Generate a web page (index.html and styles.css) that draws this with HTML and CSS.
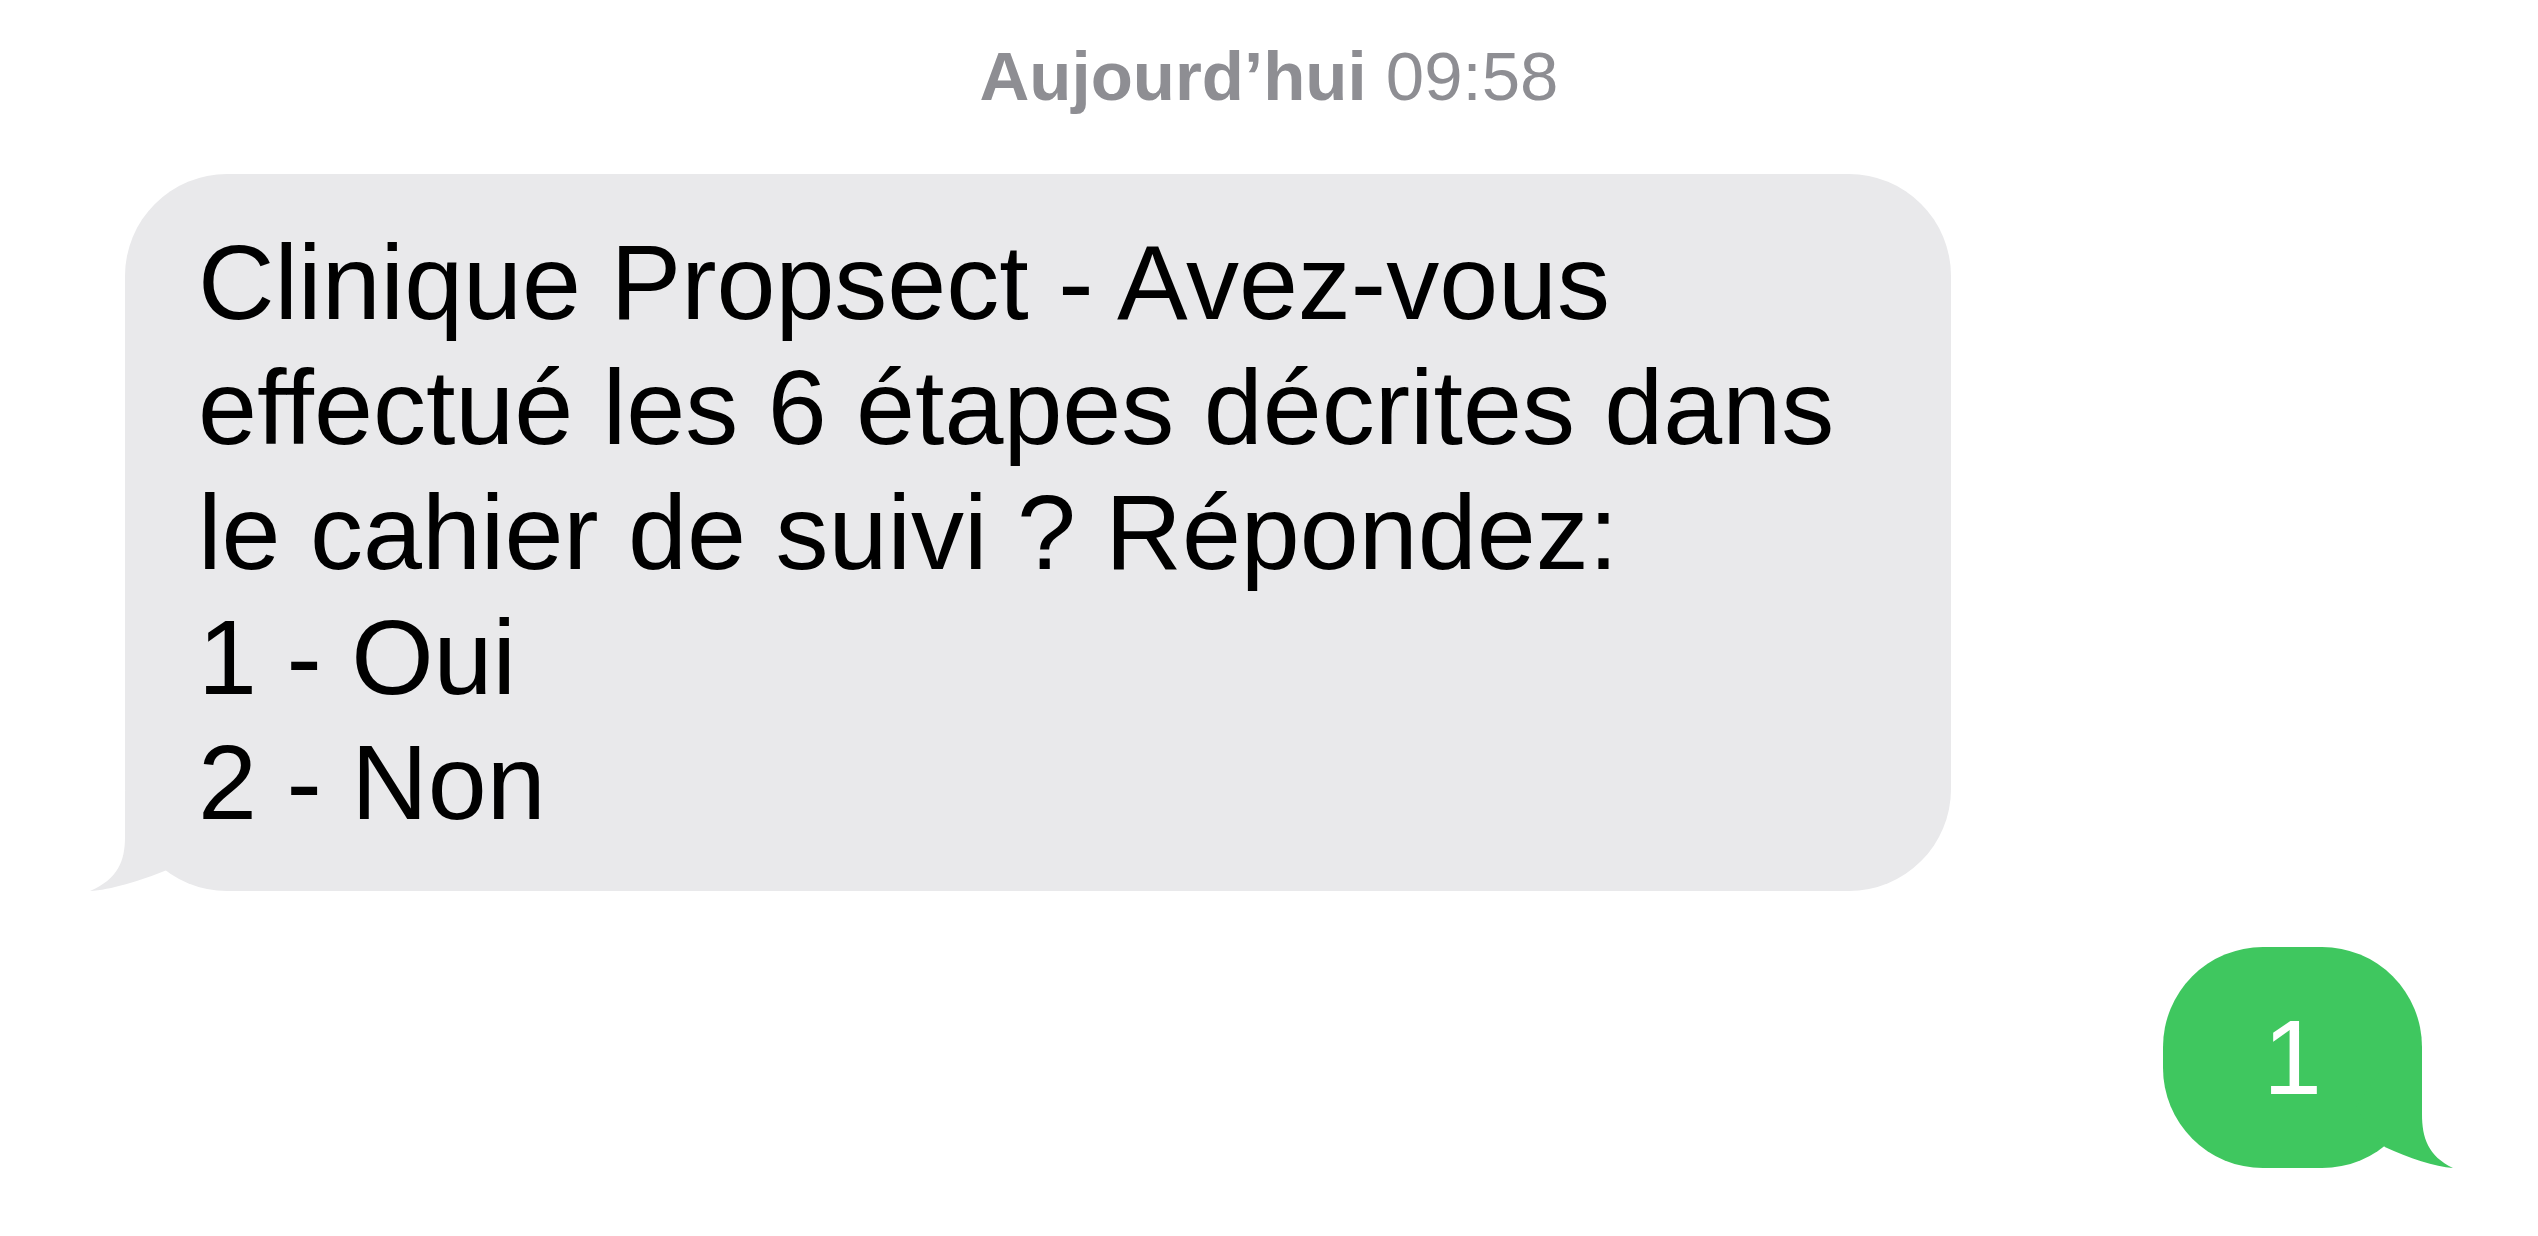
FILE: index.html
```html
<!DOCTYPE html>
<html lang="fr">
<head>
    <meta charset="UTF-8">
    <meta name="viewport" content="width=device-width, initial-scale=1.0">
    <title>Messages</title>
    <link rel="stylesheet" href="styles.css">
</head>
<body>
    <div class="thread">
        <div class="stamp"><span class="stampDay">Aujourd’hui</span> 09:58</div>

        <div class="msg msg-in">
            Clinique Propsect - Avez-vous<br>
            effectué les 6 étapes décrites dans<br>
            le cahier de suivi ? Répondez:<br>
            1 - Oui<br>
            2 - Non
            <svg class="tail" viewBox="0 0 140 100" preserveAspectRatio="none">
                <path d="M35,0 L35,46 C35,70 28,88 0,100 C20,99 50,90 77,79 L110,40 L80,0 Z"/>
            </svg>
        </div>

        <div class="msg msg-out">
            1
            <svg class="tail" viewBox="0 0 140 100" preserveAspectRatio="none">
                <path d="M35,0 L35,46 C35,70 28,88 0,100 C20,99 50,90 77,79 L110,40 L80,0 Z"/>
            </svg>
        </div>
    </div>
</body>
</html>
```

FILE: styles.css
```css
body {
    font-family: "Liberation Sans", Arial, sans-serif;
    margin: 0;
    padding: 0;
    background-color: #fff;
    color: #000;
}

.thread {
    display: flex;
    flex-direction: column;
    padding-top: 35px;
}

.stamp {
    text-align: center;
    font-size: 69px;
    line-height: 84px;
    color: #8e8e93;
    margin-bottom: 55px;
}

.stampDay {
    font-weight: bold;
}

.msg {
    position: relative;
    font-size: 106px;
    line-height: 125px;
    box-sizing: border-box;
}

.msg-in {
    align-self: flex-start;
    width: 1826px;
    margin-left: 125px;
    padding: 46px 73px;
    background-color: #e9e9eb;
    border-radius: 102px;
}

.msg-out {
    align-self: flex-end;
    margin-top: 56px;
    margin-right: 116px;
    padding: 48px 100px;
    background-color: #3fc75f;
    color: #fff;
    border-radius: 100px;
}

.tail {
    position: absolute;
    bottom: 0;
    height: 100px;
}

.msg-in .tail {
    left: -35px;
    width: 140px;
    fill: #e9e9eb;
}

/* la queue verte est la même, retournée */
.msg-out .tail {
    right: -31px;
    width: 124px;
    fill: #3fc75f;
    transform: scaleX(-1);
}
```
